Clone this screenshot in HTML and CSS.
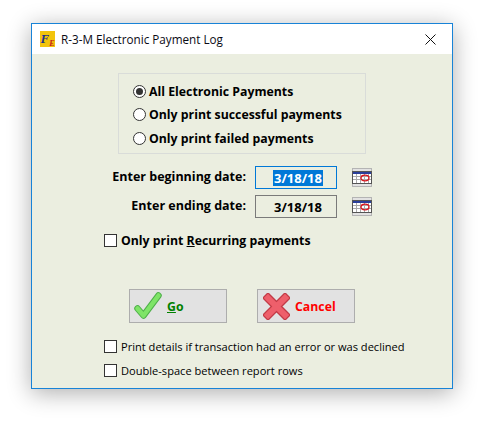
FILE: index.html
```html
<!DOCTYPE html>
<html lang="en">
<head>
<meta charset="utf-8">
<title>R-3-M Electronic Payment Log</title>
<link rel="stylesheet" href="styles.css">
</head>
<body>
<div class="window">
  <header class="titlebar">
    <svg class="logo" width="15" height="16" viewBox="0 0 15 16">
      <rect width="15" height="16" fill="#f2c40c"/>
      <text x="0.500" y="11.500" class="logo-f">F<tspan class="logo-e" dy="3">E</tspan></text>
    </svg>
    <span class="title">R-3-M Electronic Payment Log</span>
    <svg class="close" width="11" height="11" viewBox="0 0 11 11">
      <path d="M.5.5l10 10M10.500.5l-10 10" stroke="#111" stroke-width="1" fill="none"/>
    </svg>
  </header>
  <main class="content">
    <section class="group">
      <div class="opt"><span class="radio on"></span><span>All Electronic Payments</span></div>
      <div class="opt"><span class="radio"></span><span>Only print successful payments</span></div>
      <div class="opt"><span class="radio"></span><span>Only print failed payments</span></div>
    </section>
    <div class="date-row first">
      <span class="date-label">Enter beginning date:</span>
      <span class="date-field focus"><span class="sel">3/18/18</span></span>
      <svg class="cal" width="20" height="19" viewBox="0 0 20 19">
        <rect x=".5" y=".5" width="19" height="18" fill="#e2e2e2" stroke="#b4b4b4"/>
        <rect x=".5" y="3.500" width="19" height="12" fill="#fff" stroke="#555"/>
        <rect x="1" y="4" width="18" height="2" fill="#2a3f9a"/>
        <path d="M4.500 6v9M8.500 6v9M12.500 6v9M16.500 6v9M1 8.500h18M1 11.500h18" stroke="#aaa" fill="none"/>
        <ellipse cx="13" cy="10" rx="4" ry="2.800" fill="none" stroke="#d8141c" stroke-width="1.300"/>
      </svg>
    </div>
    <div class="date-row">
      <span class="date-label">Enter ending date:</span>
      <span class="date-field"><span>3/18/18</span></span>
      <svg class="cal" width="20" height="19" viewBox="0 0 20 19">
        <rect x=".5" y=".5" width="19" height="18" fill="#e2e2e2" stroke="#b4b4b4"/>
        <rect x=".5" y="3.500" width="19" height="12" fill="#fff" stroke="#555"/>
        <rect x="1" y="4" width="18" height="2" fill="#2a3f9a"/>
        <path d="M4.500 6v9M8.500 6v9M12.500 6v9M16.500 6v9M1 8.500h18M1 11.500h18" stroke="#aaa" fill="none"/>
        <ellipse cx="13" cy="10" rx="4" ry="2.800" fill="none" stroke="#d8141c" stroke-width="1.300"/>
      </svg>
    </div>
    <div class="check recurring"><span class="box"></span><span>Only print <u>R</u>ecurring payments</span></div>
    <div class="buttons">
      <div class="btn go">
        <svg width="31" height="30" viewBox="0 0 31 30">
          <path d="M4.500 17.500l6 7L25.500 4.500" fill="none" stroke="#4fb04a" stroke-width="6.500" stroke-linecap="round" stroke-linejoin="round"/>
          <path d="M4.500 17.500l6 7L25.500 4.500" fill="none" stroke="#7fe468" stroke-width="4.500" stroke-linecap="round" stroke-linejoin="round"/>
        </svg>
        <span><u>G</u>o</span>
      </div>
      <div class="btn cancel">
        <svg width="27" height="27" viewBox="0 0 27 27">
          <path d="M5 5l17 17M22 5L5 22" fill="none" stroke="#c23a46" stroke-width="8.500" stroke-linecap="square"/>
          <path d="M5 5l17 17M22 5L5 22" fill="none" stroke="#ee5f6b" stroke-width="6" stroke-linecap="square"/>
        </svg>
        <span>Cancel</span>
      </div>
    </div>
    <div class="check small first-small"><span class="box"></span><span>Print details if transaction had an error or was declined</span></div>
    <div class="check small second-small"><span class="box"></span><span>Double-space between report rows</span></div>
  </main>
</div>
</body>
</html>
```
FILE: styles.css
```css
* { box-sizing: border-box; }
html, body { margin: 0; height: 100%; background: #fff; overflow: hidden; }
body { padding: 23px 0 0 31px; font-family: "Open Sans", "Noto Sans", sans-serif; color: #000; }

.window {
  width: 422px;
  height: 366px;
  border: 1px solid #1883d7;
  background: #ebeee0;
  display: flex;
  flex-direction: column;
  box-shadow: 0 4px 22px rgba(0, 0, 0, .32);
}

.titlebar {
  height: 30px;
  background: #fff;
  display: flex;
  align-items: center;
  padding: 0 16px 0 8px;
  flex: none;
}
.logo { flex: none; }
.logo-f { font: italic bold 13px "Liberation Serif", serif; fill: #1c2f8c; }
.logo-e { font: italic bold 8px "Liberation Serif", serif; fill: #c8201c; }
.title { margin-left: 6px; font-size: 11.700px; flex: 1; color: #0a0a14; }
.close { flex: none; }

.content { flex: 1; padding: 19px 0 0 72px; }

.group {
  margin-left: 14px;
  width: 248px;
  height: 81px;
  border: 1px solid #d9dcd9;
  padding: 8px 0 0 14px;
  display: flex;
  flex-direction: column;
  gap: 5px;
}
.opt { display: flex; align-items: center; gap: 3px; height: 18.500px; font-size: 12.300px; font-weight: 700; white-space: nowrap; }
.radio { width: 13px; height: 13px; border: 1px solid #333; border-radius: 50%; background: #fff; flex: none; position: relative; }
.radio.on::after { content: ""; position: absolute; left: 2px; top: 2px; width: 7px; height: 7px; border-radius: 50%; background: #333; }

.date-row { display: flex; align-items: center; height: 23px; margin-top: 6px; }
.date-row.first { margin-top: 12px; }
.date-label { width: 142px; text-align: right; font-size: 12.500px; font-weight: 700; white-space: nowrap; padding-bottom: 2px; }
.date-field {
  margin-left: 9px;
  width: 82px;
  height: 23px;
  border: 1px solid #7a7a7a;
  display: flex;
  align-items: center;
  justify-content: center;
  font-size: 13px;
  font-weight: 700;
  background: #ebeee0;
  padding-left: 4px;
}
.date-field.focus { border-color: #0078d7; }
.sel { background: #0078d7; color: #fff; line-height: 16px; padding: 0 1px; }
.cal { margin-left: 15px; flex: none; }

.check { display: flex; align-items: center; gap: 4px; white-space: nowrap; }
.box { width: 13px; height: 13px; border: 1px solid #333; background: #fff; flex: none; }
.recurring { font-size: 12.300px; font-weight: 700; margin-top: 14px; height: 16px; }
.small { font-size: 11.080px; }
.first-small { margin-top: 16px; height: 14px; }
.second-small { margin-top: 10px; height: 14px; }

.buttons { display: flex; gap: 30px; margin: 41px 0 0 25px; }
.btn {
  width: 98px;
  height: 34px;
  background: #e2e2e2;
  border: 1px solid #adadad;
  display: flex;
  align-items: center;
  font-size: 12.300px;
  font-weight: 700;
}
.go { color: #008000; padding-left: 3px; gap: 3px; }
.cancel { color: #ff0000; padding-left: 5px; gap: 5px; }
```
